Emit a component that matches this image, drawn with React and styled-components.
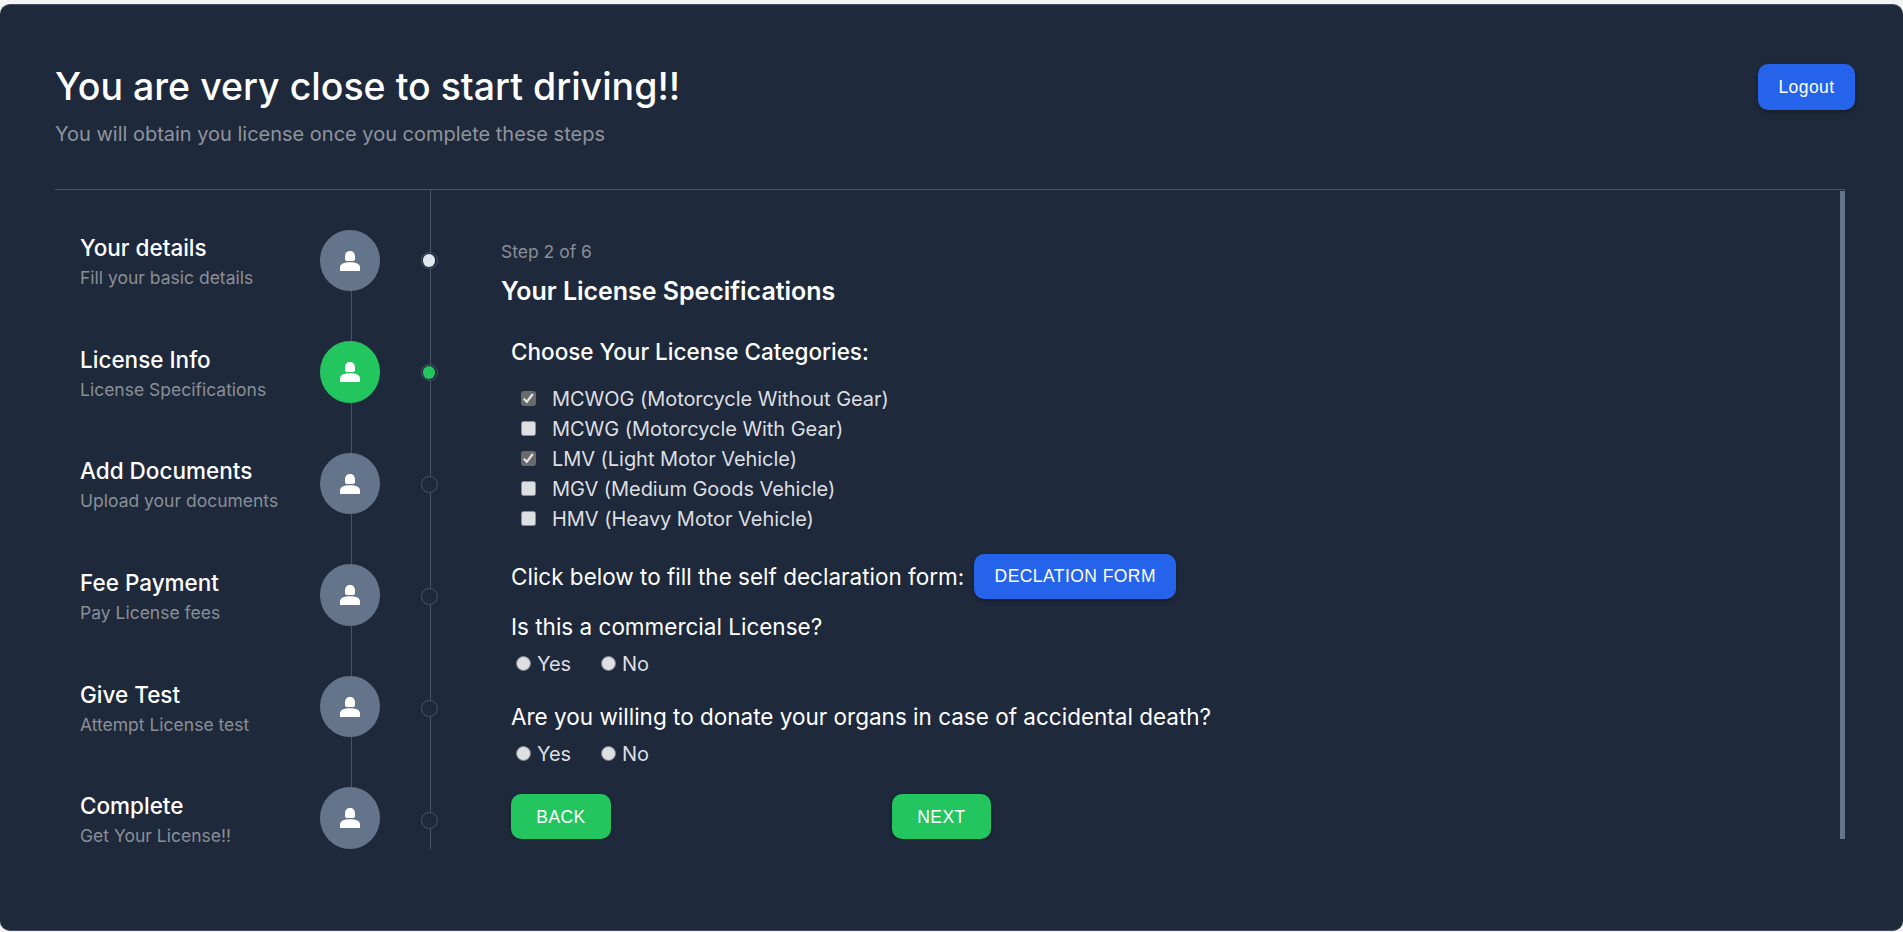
import React from "react";
import styled, { createGlobalStyle } from "styled-components";

const GlobalStyle = createGlobalStyle`
  *, *::before, *::after { box-sizing: border-box; }
  body { margin: 0; background: #f3f4f3; font-family: Inter, "Liberation Sans", sans-serif; color: #fff; overflow: hidden; }
  h1, h2, h3, p { margin: 0; font-weight: 400; }
`;

const Card = styled.main`
  margin-top: 4px;
  height: 927px;
  padding: 0 0 0 55px;
  background: #1e293b;
  border: solid #434f61;
  border-width: 1px 0;
  border-radius: 10px;
`;

const Header = styled.header`
  display: flex;
  justify-content: space-between;
  align-items: flex-start;
  height: 184px;
  padding: 59px 48px 0 0;
`;

const PageTitle = styled.h1`
  font-size: 37.5px;
  line-height: 45px;
  font-weight: 500;
`;

const Subtitle = styled.p`
  margin-top: 10px;
  font-size: 20px;
  line-height: 30px;
  letter-spacing: -0.01px;
  color: #8f949d;
`;

const Button = styled.button`
  flex: none;
  width: ${(p) => p.$width}px;
  height: ${(p) => p.$height || 45}px;
  padding: ${(p) => (p.$raised ? "0 0 1px" : "1px 0 0")};
  border: 0;
  border-radius: 10px;
  background: ${(p) => (p.$green ? "#22c55e" : "#2563eb")};
  box-shadow: 0 2px 4px rgba(0, 0, 0, 0.3);
  color: #fff;
  font: 17.5px/25px "Liberation Sans", Arial, sans-serif;
  letter-spacing: 0.025em;
`;

const Body = styled.div`
  display: flex;
  width: 1790px;
  height: 661px;
  border-top: 1px solid #475569;
`;

const StepLabels = styled.ol`
  list-style: none;
  width: 265px;
  margin: 0;
  padding: 40px 0 0 25px;
`;

const StepLabel = styled.li`
  height: 111.7px;
`;

const StepName = styled.h3`
  font-size: 22.5px;
  line-height: 35px;
  font-weight: 500;
`;

const StepHint = styled.p`
  font-size: 17.5px;
  line-height: 25px;
  color: #8a8f97;
`;

const Avatars = styled.div`
  display: flex;
  flex-direction: column;
  align-items: center;
  width: 60px;
  padding-top: 40px;
`;

const Avatar = styled.div`
  display: flex;
  align-items: center;
  justify-content: center;
  flex: none;
  width: 60px;
  height: 61.4px;
  border-radius: 50%;
  background: ${(p) => (p.$active ? "#22c55e" : "#64748b")};
`;

const Connector = styled.div`
  flex: none;
  width: 1px;
  height: 50.1px;
  margin-left: 2px;
  background: #475569;
`;

const Track = styled.div`
  display: flex;
  flex-direction: column;
  align-items: center;
  width: 17px;
  margin-left: 41px;
`;

const TrackLine = styled.div`
  flex: none;
  width: 1px;
  margin-left: 2px;
  height: ${(p) => p.$height}px;
  background: #475569;
`;

const Dot = styled.div`
  display: flex;
  align-items: center;
  flex: none;
  width: 17px;
  height: 17px;
  padding-left: 0.5px;
  border: 1px solid #475569;
  border-radius: 50%;

  &::after {
    content: "";
    width: 12.5px;
    height: 13px;
    border-radius: 50%;
    background: ${(p) => p.$fill || "transparent"};
  }
`;

const Panel = styled.section`
  flex: 1;
  margin: 1px 0 0 63px;
  padding-top: 48px;
  border-right: 5px solid #64748b;
  overflow: hidden;
  height: 648px;
`;

const StepCount = styled.p`
  font-size: 17.5px;
  line-height: 25px;
  color: #8a8f97;
`;

const PanelTitle = styled.h2`
  margin-top: 10px;
  font-size: 25px;
  line-height: 35px;
  font-weight: 600;
  letter-spacing: -0.04px;
`;

const Form = styled.form`
  padding-left: 10px;
`;

const Question = styled.p`
  font-size: 22.5px;
  line-height: 35px;
  font-weight: ${(p) => p.$weight || 400};
  margin-top: ${(p) => p.$top || 0}px;
`;

const Options = styled.div`
  margin-top: 15px;
  padding-left: 10px;
`;

const Option = styled.label`
  display: flex;
  align-items: center;
  height: 30px;
  gap: ${(p) => p.$gap}px;
  width: ${(p) => (p.$width ? p.$width + "px" : "auto")};
  font-size: 20px;
  line-height: 30px;
  letter-spacing: -0.05px;
  color: #dddfe2;
`;

const CheckBox = styled.span`
  display: flex;
  width: 15px;
  height: 15px;
  margin-bottom: 1px;
  border: 1px solid ${(p) => (p.$on ? "#696a6c" : "#8c8f93")};
  border-radius: 2.5px;
  background: ${(p) => (p.$on ? "#696a6c" : "#dddfe2")};
`;

const Radio = styled.span`
  width: 15px;
  height: 15px;
  margin-bottom: 1px;
  border: 1px solid #7d8085;
  border-radius: 50%;
  background: #dddfe2;
`;

const FormLink = styled.div`
  display: flex;
  align-items: center;
  gap: 10px;
  height: 45px;
  margin-top: 20px;
`;

const RadioRow = styled.div`
  display: flex;
  margin-top: 5px;
  padding-left: 5px;
`;

const Actions = styled.div`
  display: flex;
  gap: 281px;
  margin-top: 25px;
`;

const UserIcon = () => (
  <svg width="20" height="20" viewBox="0 0 20 20" fill="#fff">
    <path d="M5 5.500C5 2 7 0 10 0s5 2 5 5.500V8c0 1.300-.8 2-2 2H7c-1.200 0-2-.7-2-2z" />
    <path d="M0 20v-3.500C0 13 4 11.300 10 11.300s10 1.700 10 5.200V20z" />
  </svg>
);

const Tick = () => (
  <svg width="13" height="13" viewBox="0 0 13 13" fill="none" stroke="#e3e4e6" strokeWidth="2.2">
    <path d="M1.800 6.800l3 3 6-7.800" />
  </svg>
);

const steps = [
  ["Your details", "Fill your basic details"],
  ["License Info", "License Specifications"],
  ["Add Documents", "Upload your documents"],
  ["Fee Payment", "Pay License fees"],
  ["Give Test", "Attempt License test"],
  ["Complete", "Get Your License!!"],
];
const dotFills = ["#e2e8f0", "#22c55e"];

const categories = [
  ["MCWOG (Motorcycle Without Gear)", true],
  ["MCWG (Motorcycle With Gear)", false],
  ["LMV (Light Motor Vehicle)", true],
  ["MGV (Medium Goods Vehicle)", false],
  ["HMV (Heavy Motor Vehicle)", false],
];

const YesNo = () => (
  <RadioRow>
    <Option $gap={6} $width={85}><Radio />Yes</Option>
    <Option $gap={6}><Radio />No</Option>
  </RadioRow>
);

export default function App() {
  return (
    <>
      <GlobalStyle />
      <Card>
        <Header>
          <div>
            <PageTitle>You are very close to start driving!!</PageTitle>
            <Subtitle>You will obtain you license once you complete these steps</Subtitle>
          </div>
          <Button $width={97} $height={46}>Logout</Button>
        </Header>
        <Body>
          <StepLabels>
            {steps.map(([name, hint]) => (
              <StepLabel key={name}>
                <StepName>{name}</StepName>
                <StepHint>{hint}</StepHint>
              </StepLabel>
            ))}
          </StepLabels>
          <Avatars>
            {steps.map(([name], i) => (
              <React.Fragment key={name}>
                {i > 0 && <Connector />}
                <Avatar $active={i === 1}><UserIcon /></Avatar>
              </React.Fragment>
            ))}
          </Avatars>
          <Track>
            {steps.map(([name], i) => (
              <React.Fragment key={name}>
                <TrackLine $height={i === 0 ? 62 : 95} />
                <Dot $fill={dotFills[i]} />
              </React.Fragment>
            ))}
            <TrackLine $height={20} />
          </Track>
          <Panel>
            <StepCount>Step 2 of 6</StepCount>
            <PanelTitle>Your License Specifications</PanelTitle>
            <Form>
              <Question $weight={500} $top={25}>Choose Your License Categories:</Question>
              <Options>
                {categories.map(([label, on]) => (
                  <Option key={label} $gap={16}>
                    <CheckBox $on={on}>{on && <Tick />}</CheckBox>
                    {label}
                  </Option>
                ))}
              </Options>
              <FormLink>
                <Question>Click below to fill the self declaration form:</Question>
                <Button type="button" $raised $width={202}>DECLATION FORM</Button>
              </FormLink>
              <Question $top={10}>Is this a commercial License?</Question>
              <YesNo />
              <Question $top={20}>Are you willing to donate your organs in case of accidental death?</Question>
              <YesNo />
              <Actions>
                <Button type="button" $green $width={100}>BACK</Button>
                <Button type="button" $green $width={99}>NEXT</Button>
              </Actions>
            </Form>
          </Panel>
        </Body>
      </Card>
    </>
  );
}
